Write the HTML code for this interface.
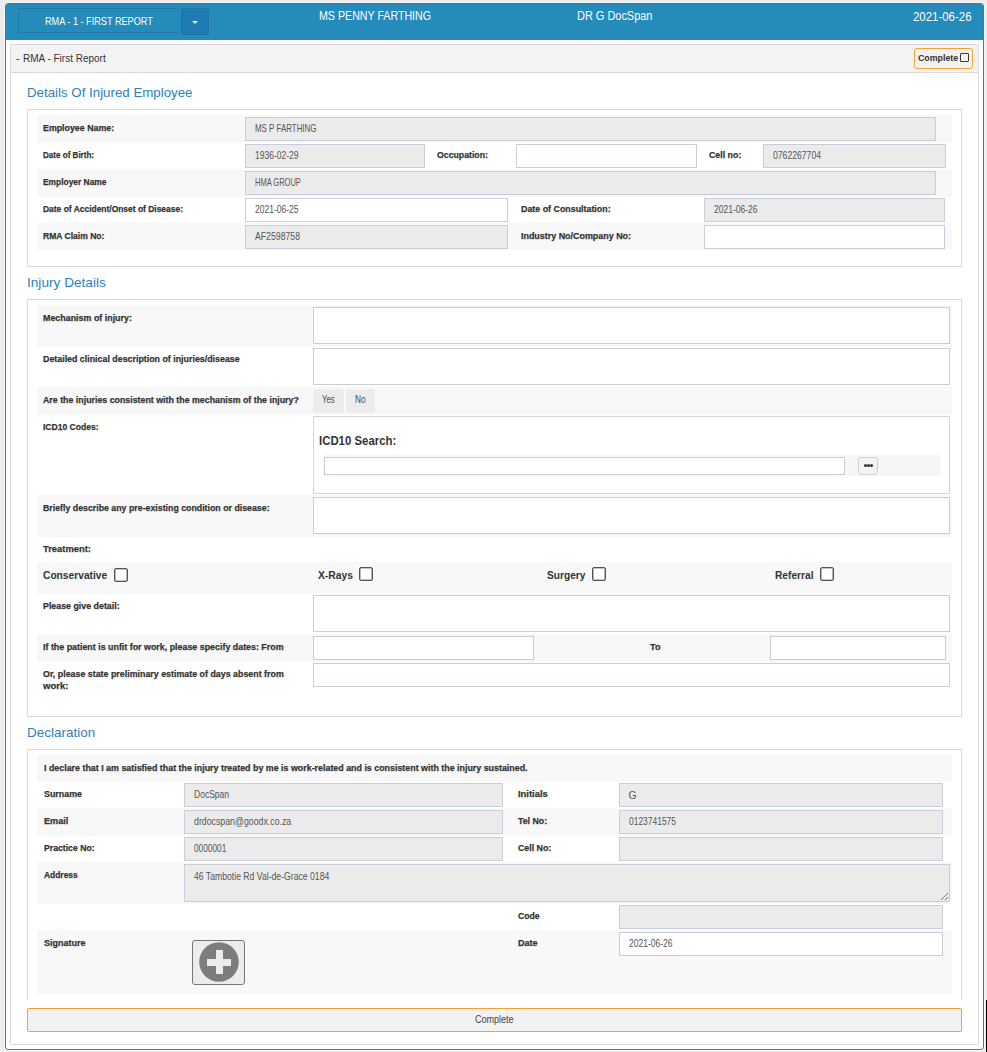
<!DOCTYPE html>
<html><head><meta charset="utf-8"><style>
html,body{margin:0;padding:0;width:987px;height:1052px;overflow:hidden;background:#ececec;}
body>div{position:absolute;}
.t{white-space:nowrap;font-family:"Liberation Sans",sans-serif;transform-origin:0 0;}
</style></head><body>
<div style="left:4px;top:2px;width:981px;height:1049px;background:#f9f7f5;border-radius:4px"></div>
<div style="left:5px;top:3px;width:979px;height:1047px;background:#fff;border:1px solid #1f86b8;box-sizing:border-box;border-radius:3px"></div>
<div style="left:6px;top:4px;width:977px;height:36px;background:#248bbb;border-radius:2px 2px 0 0"></div>
<div style="left:18px;top:8px;width:161px;height:25px;border:1px solid #1e7aa9;border-right:none;box-sizing:border-box"></div>
<div style="left:181px;top:8px;width:28px;height:27px;background:#1f7cb2;border:1px solid #1d76aa;box-sizing:border-box;border-radius:2px"></div>
<div style="left:192px;top:21px;width:0;height:0;border-left:3px solid transparent;border-right:3px solid transparent;border-top:3px solid #dcebf4"></div>
<div class="t" style="left:45px;top:15.55px;font-size:11px;line-height:11px;font-weight:400;color:#fff;transform:scaleX(0.8305);">RMA - 1 - FIRST REPORT</div>
<div class="t" style="left:318.6px;top:9.98px;font-size:12.5px;line-height:12.5px;font-weight:400;color:#fff;transform:scaleX(0.8520);">MS PENNY FARTHING</div>
<div class="t" style="left:577px;top:9.98px;font-size:12.5px;line-height:12.5px;font-weight:400;color:#fff;transform:scaleX(0.8753);">DR G DocSpan</div>
<div class="t" style="left:912.5px;top:9.75px;font-size:13px;line-height:13px;font-weight:400;color:#fff;transform:scaleX(0.8795);">2021-06-26</div>
<div style="left:10px;top:44px;width:969px;height:1001px;border:1px solid #d9d9d9;border-radius:2px;box-sizing:border-box;background:#fff"></div>
<div style="left:11px;top:45px;width:967px;height:28px;background:#f3f3f3;border-bottom:1px solid #d8d8d8;border-radius:1px 1px 0 0;box-sizing:border-box"></div>
<div class="t" style="left:16px;top:52.65px;font-size:11px;line-height:11px;font-weight:400;color:#333;">-</div>
<div class="t" style="left:23.3px;top:52.65px;font-size:11px;line-height:11px;font-weight:400;color:#333;transform:scaleX(0.9076);">RMA - First Report</div>
<div style="left:914px;top:48px;width:59px;height:21px;border:1px solid #f5a030;border-radius:3px;box-sizing:border-box;background:#f2f2f2"></div>
<div class="t" style="left:918.4px;top:54.27px;font-size:8.5px;line-height:8.5px;font-weight:700;color:#333;transform:scaleX(1.0356);">Complete</div>
<div style="left:960px;top:53px;width:9px;height:9px;border:1px solid #3a3a3a;border-radius:1px;box-sizing:border-box;background:#f4f4f4"></div>
<div class="t" style="left:27.3px;top:85.83px;font-size:13.5px;line-height:13.5px;font-weight:400;color:#2b82bf;transform:scaleX(0.9847);">Details Of Injured Employee</div>
<div class="t" style="left:26.8px;top:275.82px;font-size:13.5px;line-height:13.5px;font-weight:400;color:#2b82bf;transform:scaleX(1.0101);">Injury Details</div>
<div class="t" style="left:27.2px;top:725.73px;font-size:13.5px;line-height:13.5px;font-weight:400;color:#2b82bf;transform:scaleX(0.9990);">Declaration</div>
<div style="left:27px;top:109px;width:935px;height:158px;border:1px solid #d9d9d9;box-sizing:border-box"></div>
<div style="left:27px;top:299px;width:935px;height:418px;border:1px solid #d9d9d9;box-sizing:border-box"></div>
<div style="left:27px;top:749px;width:935px;height:251px;border:1px solid #d9d9d9;border-bottom:none;box-sizing:border-box"></div>
<div style="left:37px;top:115px;width:915px;height:28px;background:#f8f8f8"></div>
<div style="left:37px;top:169px;width:915px;height:28px;background:#f8f8f8"></div>
<div style="left:37px;top:223px;width:915px;height:27px;background:#f8f8f8"></div>
<div class="t" style="left:43.4px;top:123.06px;font-size:9.7px;line-height:9.7px;font-weight:700;color:#333;transform:scaleX(0.9107);-webkit-text-stroke:0.25px #333;">Employee Name:</div>
<div style="left:245px;top:117px;width:691px;height:24px;background:#ebebeb;border:1px solid #c8cdd8;box-sizing:border-box"></div>
<div class="t" style="left:254.5px;top:123.85px;font-size:10.3px;line-height:10.3px;font-weight:400;color:#555;transform:scaleX(0.7714);">MS P FARTHING</div>
<div class="t" style="left:43.4px;top:149.85px;font-size:9.7px;line-height:9.7px;font-weight:700;color:#333;transform:scaleX(0.8321);-webkit-text-stroke:0.25px #333;">Date of Birth:</div>
<div style="left:245px;top:144px;width:180px;height:24px;background:#ebebeb;border:1px solid #c8cdd8;box-sizing:border-box"></div>
<div class="t" style="left:254.5px;top:150.65px;font-size:10.3px;line-height:10.3px;font-weight:400;color:#555;transform:scaleX(0.8265);">1936-02-29</div>
<div class="t" style="left:437.4px;top:149.85px;font-size:9.7px;line-height:9.7px;font-weight:700;color:#333;transform:scaleX(0.9001);-webkit-text-stroke:0.25px #333;">Occupation:</div>
<div style="left:516px;top:144px;width:181px;height:24px;background:#fff;border:1px solid #c8cdd8;box-sizing:border-box"></div>
<div class="t" style="left:708.8px;top:149.85px;font-size:9.7px;line-height:9.7px;font-weight:700;color:#333;transform:scaleX(0.9101);-webkit-text-stroke:0.25px #333;">Cell no:</div>
<div style="left:763px;top:144px;width:183px;height:24px;background:#ebebeb;border:1px solid #c8cdd8;box-sizing:border-box"></div>
<div class="t" style="left:772.5px;top:150.65px;font-size:10.3px;line-height:10.3px;font-weight:400;color:#555;transform:scaleX(0.8382);">0762267704</div>
<div class="t" style="left:43.4px;top:176.85px;font-size:9.7px;line-height:9.7px;font-weight:700;color:#333;transform:scaleX(0.8673);-webkit-text-stroke:0.25px #333;">Employer Name</div>
<div style="left:245px;top:171px;width:691px;height:24px;background:#ebebeb;border:1px solid #c8cdd8;box-sizing:border-box"></div>
<div class="t" style="left:254.5px;top:177.65px;font-size:10.3px;line-height:10.3px;font-weight:400;color:#555;transform:scaleX(0.7282);">HMA GROUP</div>
<div class="t" style="left:43.4px;top:203.95px;font-size:9.7px;line-height:9.7px;font-weight:700;color:#333;transform:scaleX(0.8714);-webkit-text-stroke:0.25px #333;">Date of Accident/Onset of Disease:</div>
<div style="left:245px;top:198px;width:263px;height:24px;background:#fff;border:1px solid #c8cdd8;box-sizing:border-box"></div>
<div class="t" style="left:254.5px;top:204.65px;font-size:10.3px;line-height:10.3px;font-weight:400;color:#555;transform:scaleX(0.8265);">2021-06-25</div>
<div class="t" style="left:521.1px;top:203.95px;font-size:9.7px;line-height:9.7px;font-weight:700;color:#333;transform:scaleX(0.9147);-webkit-text-stroke:0.25px #333;">Date of Consultation:</div>
<div style="left:704px;top:198px;width:241px;height:24px;background:#ebebeb;border:1px solid #c8cdd8;box-sizing:border-box"></div>
<div class="t" style="left:713.5px;top:204.65px;font-size:10.3px;line-height:10.3px;font-weight:400;color:#555;transform:scaleX(0.8265);">2021-06-26</div>
<div class="t" style="left:43.4px;top:231.06px;font-size:9.7px;line-height:9.7px;font-weight:700;color:#333;transform:scaleX(0.8820);-webkit-text-stroke:0.25px #333;">RMA Claim No:</div>
<div style="left:245px;top:225px;width:263px;height:24px;background:#ebebeb;border:1px solid #c8cdd8;box-sizing:border-box"></div>
<div class="t" style="left:254.5px;top:231.65px;font-size:10.3px;line-height:10.3px;font-weight:400;color:#555;transform:scaleX(0.8447);">AF2598758</div>
<div class="t" style="left:521.1px;top:231.06px;font-size:9.7px;line-height:9.7px;font-weight:700;color:#333;transform:scaleX(0.9206);-webkit-text-stroke:0.25px #333;">Industry No/Company No:</div>
<div style="left:704px;top:225px;width:241px;height:24px;background:#fff;border:1px solid #c8cdd8;box-sizing:border-box"></div>
<div style="left:37px;top:305px;width:915px;height:42px;background:#f8f8f8"></div>
<div style="left:37px;top:387px;width:915px;height:28px;background:#f8f8f8"></div>
<div style="left:37px;top:495px;width:915px;height:42px;background:#f8f8f8"></div>
<div style="left:37px;top:562px;width:915px;height:32px;background:#f8f8f8"></div>
<div style="left:37px;top:634px;width:915px;height:28px;background:#f8f8f8"></div>
<div class="t" style="left:43.1px;top:313.06px;font-size:9.7px;line-height:9.7px;font-weight:700;color:#333;transform:scaleX(0.9175);-webkit-text-stroke:0.25px #333;">Mechanism of injury:</div>
<div style="left:313px;top:307px;width:637px;height:37px;background:#fff;border:1px solid #c8cdd8;box-sizing:border-box"></div>
<div class="t" style="left:43.1px;top:354.06px;font-size:9.7px;line-height:9.7px;font-weight:700;color:#333;transform:scaleX(0.9131);-webkit-text-stroke:0.25px #333;">Detailed clinical description of injuries/disease</div>
<div style="left:313px;top:348px;width:637px;height:37px;background:#fff;border:1px solid #c8cdd8;box-sizing:border-box"></div>
<div class="t" style="left:43.1px;top:395.06px;font-size:9.7px;line-height:9.7px;font-weight:700;color:#333;transform:scaleX(0.9105);-webkit-text-stroke:0.25px #333;">Are the injuries consistent with the mechanism of the injury?</div>
<div style="left:313px;top:389px;width:31px;height:24px;background:#ececec;border-radius:3px"></div>
<div style="left:346px;top:389px;width:29px;height:24px;background:#ececec;border-radius:3px"></div>
<div class="t" style="left:322.2px;top:395.25px;font-size:10.3px;line-height:10.3px;font-weight:400;color:#4a4a4a;transform:scaleX(0.7505);">Yes</div>
<div class="t" style="left:355.4px;top:395.25px;font-size:10.3px;line-height:10.3px;font-weight:400;color:#4a4a4a;transform:scaleX(0.8116);">No</div>
<div class="t" style="left:43.1px;top:421.75px;font-size:9.7px;line-height:9.7px;font-weight:700;color:#333;transform:scaleX(0.8818);-webkit-text-stroke:0.25px #333;">ICD10 Codes:</div>
<div style="left:313px;top:416px;width:637px;height:78px;background:#fff;border:1px solid #d5d5d5;box-sizing:border-box"></div>
<div class="t" style="left:319.1px;top:434.77px;font-size:12.5px;line-height:12.5px;font-weight:700;color:#333;transform:scaleX(0.9115);">ICD10 Search:</div>
<div style="left:323px;top:455px;width:618px;height:21px;background:#f6f6f6"></div>
<div style="left:324px;top:457px;width:521px;height:18px;background:#fff;border:1px solid #c8cdd8;box-sizing:border-box"></div>
<div style="left:858px;top:457px;width:20px;height:18px;background:#f3f3f3;border:1px solid #d0d0d0;border-radius:3px;box-sizing:border-box"></div>
<div style="left:864px;top:464px;width:3px;height:3px;background:#333;border-radius:50%;box-shadow:3px 0 0 #333,6px 0 0 #333"></div>
<div class="t" style="left:43.1px;top:502.75px;font-size:9.7px;line-height:9.7px;font-weight:700;color:#333;transform:scaleX(0.9070);-webkit-text-stroke:0.25px #333;">Briefly describe any pre-existing condition or disease:</div>
<div style="left:313px;top:497px;width:637px;height:37px;background:#fff;border:1px solid #c8cdd8;box-sizing:border-box"></div>
<div class="t" style="left:43.1px;top:544.05px;font-size:9.7px;line-height:9.7px;font-weight:700;color:#333;transform:scaleX(0.9664);-webkit-text-stroke:0.25px #333;">Treatment:</div>
<div class="t" style="left:43.3px;top:569.85px;font-size:11px;line-height:11px;font-weight:700;color:#333;transform:scaleX(0.9291);">Conservative</div>
<div style="left:114px;top:568px;width:14px;height:14px;background:#fff;border:1px solid #555;border-radius:2px;box-sizing:border-box;box-shadow:inset 0 0 0 0.6px #888"></div>
<div class="t" style="left:318px;top:569.85px;font-size:11px;line-height:11px;font-weight:700;color:#333;transform:scaleX(0.9357);">X-Rays</div>
<div style="left:359px;top:567px;width:14px;height:14px;background:#fff;border:1px solid #555;border-radius:2px;box-sizing:border-box;box-shadow:inset 0 0 0 0.6px #888"></div>
<div class="t" style="left:547.3px;top:569.85px;font-size:11px;line-height:11px;font-weight:700;color:#333;transform:scaleX(0.9231);">Surgery</div>
<div style="left:592px;top:567px;width:14px;height:14px;background:#fff;border:1px solid #555;border-radius:2px;box-sizing:border-box;box-shadow:inset 0 0 0 0.6px #888"></div>
<div class="t" style="left:775.3px;top:569.85px;font-size:11px;line-height:11px;font-weight:700;color:#333;transform:scaleX(0.9255);">Referral</div>
<div style="left:820px;top:567px;width:14px;height:14px;background:#fff;border:1px solid #555;border-radius:2px;box-sizing:border-box;box-shadow:inset 0 0 0 0.6px #888"></div>
<div class="t" style="left:43.1px;top:600.55px;font-size:9.7px;line-height:9.7px;font-weight:700;color:#333;transform:scaleX(0.9120);-webkit-text-stroke:0.25px #333;">Please give detail:</div>
<div style="left:313px;top:595px;width:637px;height:37px;background:#fff;border:1px solid #c8cdd8;box-sizing:border-box"></div>
<div class="t" style="left:43.1px;top:641.75px;font-size:9.7px;line-height:9.7px;font-weight:700;color:#333;transform:scaleX(0.9157);-webkit-text-stroke:0.25px #333;">If the patient is unfit for work, please specify dates: From</div>
<div style="left:313px;top:636px;width:221px;height:24px;background:#fff;border:1px solid #c8cdd8;box-sizing:border-box"></div>
<div class="t" style="left:649.9px;top:642.36px;font-size:9.7px;line-height:9.7px;font-weight:700;color:#333;transform:scaleX(0.9413);-webkit-text-stroke:0.25px #333;">To</div>
<div style="left:770px;top:636px;width:176px;height:24px;background:#fff;border:1px solid #c8cdd8;box-sizing:border-box"></div>
<div class="t" style="left:43.1px;top:668.65px;font-size:9.7px;line-height:9.7px;font-weight:700;color:#333;transform:scaleX(0.9145);-webkit-text-stroke:0.25px #333;">Or, please state preliminary estimate of days absent from</div>
<div class="t" style="left:43.1px;top:681.15px;font-size:9.7px;line-height:9.7px;font-weight:700;color:#333;transform:scaleX(0.9846);-webkit-text-stroke:0.25px #333;">work:</div>
<div style="left:313px;top:663px;width:637px;height:24px;background:#fff;border:1px solid #c8cdd8;box-sizing:border-box"></div>
<div style="left:37px;top:755px;width:915px;height:27px;background:#f8f8f8"></div>
<div style="left:37px;top:808px;width:915px;height:28px;background:#f8f8f8"></div>
<div style="left:37px;top:862px;width:915px;height:42px;background:#f8f8f8"></div>
<div style="left:37px;top:930px;width:915px;height:64px;background:#f8f8f8"></div>
<div class="t" style="left:43.6px;top:763.05px;font-size:9.7px;line-height:9.7px;font-weight:700;color:#333;transform:scaleX(0.9156);-webkit-text-stroke:0.25px #333;">I declare that I am satisfied that the injury treated by me is work-related and is consistent with the injury sustained.</div>
<div class="t" style="left:43.6px;top:789.05px;font-size:9.7px;line-height:9.7px;font-weight:700;color:#333;transform:scaleX(0.9177);-webkit-text-stroke:0.25px #333;">Surname</div>
<div style="left:184px;top:783px;width:319px;height:24px;background:#ebebeb;border:1px solid #c8cdd8;box-sizing:border-box"></div>
<div class="t" style="left:193.8px;top:790.04px;font-size:10.3px;line-height:10.3px;font-weight:400;color:#555;transform:scaleX(0.8268);">DocSpan</div>
<div class="t" style="left:518.2px;top:789.25px;font-size:9.7px;line-height:9.7px;font-weight:700;color:#333;transform:scaleX(0.9691);-webkit-text-stroke:0.25px #333;">Initials</div>
<div style="left:619px;top:783px;width:324px;height:24px;background:#ebebeb;border:1px solid #c8cdd8;box-sizing:border-box"></div>
<div class="t" style="left:628.6px;top:790.84px;font-size:10.3px;line-height:10.3px;font-weight:400;color:#555;">G</div>
<div class="t" style="left:43.6px;top:816.25px;font-size:9.7px;line-height:9.7px;font-weight:700;color:#333;transform:scaleX(0.9383);-webkit-text-stroke:0.25px #333;">Email</div>
<div style="left:184px;top:810px;width:319px;height:24px;background:#ebebeb;border:1px solid #c8cdd8;box-sizing:border-box"></div>
<div class="t" style="left:193.8px;top:816.75px;font-size:10.3px;line-height:10.3px;font-weight:400;color:#555;transform:scaleX(0.8526);">drdocspan@goodx.co.za</div>
<div class="t" style="left:518.2px;top:816.15px;font-size:9.7px;line-height:9.7px;font-weight:700;color:#333;transform:scaleX(0.9067);-webkit-text-stroke:0.25px #333;">Tel No:</div>
<div style="left:619px;top:810px;width:324px;height:24px;background:#ebebeb;border:1px solid #c8cdd8;box-sizing:border-box"></div>
<div class="t" style="left:628.6px;top:817.04px;font-size:10.3px;line-height:10.3px;font-weight:400;color:#555;transform:scaleX(0.8207);">0123741575</div>
<div class="t" style="left:43.6px;top:843.25px;font-size:9.7px;line-height:9.7px;font-weight:700;color:#333;transform:scaleX(0.8950);-webkit-text-stroke:0.25px #333;">Practice No:</div>
<div style="left:184px;top:837px;width:319px;height:24px;background:#ebebeb;border:1px solid #c8cdd8;box-sizing:border-box"></div>
<div class="t" style="left:193.8px;top:843.54px;font-size:10.3px;line-height:10.3px;font-weight:400;color:#555;transform:scaleX(0.8061);">0000001</div>
<div class="t" style="left:518.2px;top:843.05px;font-size:9.7px;line-height:9.7px;font-weight:700;color:#333;transform:scaleX(0.9082);-webkit-text-stroke:0.25px #333;">Cell No:</div>
<div style="left:619px;top:837px;width:324px;height:24px;background:#ebebeb;border:1px solid #c8cdd8;box-sizing:border-box"></div>
<div class="t" style="left:43.6px;top:870.05px;font-size:9.7px;line-height:9.7px;font-weight:700;color:#333;transform:scaleX(0.8686);-webkit-text-stroke:0.25px #333;">Address</div>
<div style="left:184px;top:864px;width:766px;height:38px;background:#ebebeb;border:1px solid #c8cdd8;box-sizing:border-box"></div>
<div class="t" style="left:193.7px;top:871.95px;font-size:10.3px;line-height:10.3px;font-weight:400;color:#555;transform:scaleX(0.8399);">46 Tambotie Rd Val-de-Grace 0184</div>
<svg style="position:absolute;left:939px;top:891px" width="10" height="10"><path d="M9 2 L2 9 M9 6 L6 9" stroke="#777" stroke-width="1"/></svg>
<div class="t" style="left:518.2px;top:910.75px;font-size:9.7px;line-height:9.7px;font-weight:700;color:#333;transform:scaleX(0.8948);-webkit-text-stroke:0.25px #333;">Code</div>
<div style="left:619px;top:905px;width:324px;height:24px;background:#ebebeb;border:1px solid #c8cdd8;box-sizing:border-box"></div>
<div class="t" style="left:43.5px;top:937.96px;font-size:9.7px;line-height:9.7px;font-weight:700;color:#333;transform:scaleX(0.9281);-webkit-text-stroke:0.25px #333;">Signature</div>
<div style="left:192px;top:940px;width:53px;height:45px;background:#ececec;border:1px solid #777;border-radius:3px;box-sizing:border-box"></div>
<svg style="position:absolute;left:199px;top:942px" width="40" height="40"><circle cx="20" cy="20" r="19.8" fill="#7d7d7d"/><rect x="8" y="17" width="24" height="7" fill="#ececec"/><rect x="17" y="8" width="7" height="24" fill="#ececec"/></svg>
<div class="t" style="left:518.2px;top:937.75px;font-size:9.7px;line-height:9.7px;font-weight:700;color:#333;transform:scaleX(0.9359);-webkit-text-stroke:0.25px #333;">Date</div>
<div style="left:619px;top:932px;width:324px;height:24px;background:#fff;border:1px solid #c8cdd8;box-sizing:border-box"></div>
<div class="t" style="left:628.6px;top:939.25px;font-size:10.3px;line-height:10.3px;font-weight:400;color:#555;transform:scaleX(0.8268);">2021-06-26</div>
<div style="left:27px;top:1008px;width:935px;height:24px;border:1px solid #f5a030;border-radius:2px;box-sizing:border-box;background:#f2f2f2"></div>
<div class="t" style="left:475.1px;top:1014.70px;font-size:10px;line-height:10px;font-weight:400;color:#444;transform:scaleX(0.9019);">Complete</div>
<div style="left:986px;top:1000px;width:1px;height:52px;background:#000"></div>
</body></html>
